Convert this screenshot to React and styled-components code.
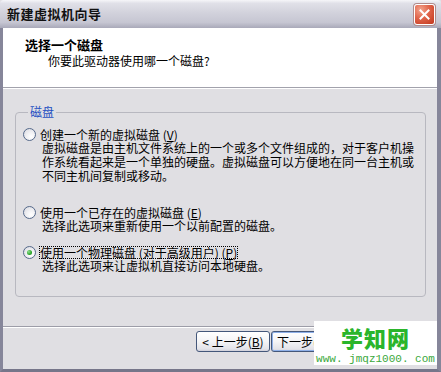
import React from 'react';
import styled, { createGlobalStyle } from 'styled-components';

const Global = createGlobalStyle`
  html, body { margin: 0; padding: 0; background: #e0dfe3; }
  body {
    font-family: "Noto Sans CJK SC", "Liberation Sans", sans-serif;
    font-size: 12px;
    color: #000;
  }
  #root { width: 441px; height: 372px; }
`;

const Window = styled.div`
  position: relative;
  width: 441px;
  height: 372px;
  display: flex;
  flex-direction: column;
  overflow: hidden;
  background: #e0dfe3;
`;

const TitleBar = styled.div`
  height: 28px;
  flex: none;
  display: flex;
  align-items: center;
  justify-content: space-between;
  padding: 0 6px 0 7px;
  box-sizing: border-box;
  border-radius: 4px 4px 0 0;
  background: linear-gradient(180deg, #f6f6f9 0%, #e0e0e8 12%, #d2d2dc 45%, #c6c6d2 80%, #a9a9b9 100%);
`;

const Title = styled.span`
  font-size: 13px;
  font-weight: 700;
  line-height: 16px;
  letter-spacing: 0.5px;
  color: #111;
`;

const CloseButton = styled.div`
  width: 21px;
  height: 21px;
  box-sizing: border-box;
  border: 1px solid #fff;
  border-radius: 3px;
  background: radial-gradient(circle at 30% 25%, #f3a48d 0%, #e0644a 45%, #c0361c 100%);
  display: flex;
  align-items: center;
  justify-content: center;
  box-shadow: 0 0 0 1px #b08a8a;
`;

const Frame = styled.div`
  flex: 1;
  display: flex;
  flex-direction: column;
  border-left: 3px solid #86869a;
  border-right: 4px solid #86869a;
  border-bottom: 3px solid #76768a;
  min-height: 0;
`;

const Header = styled.div`
  height: 60px;
  flex: none;
  box-sizing: border-box;
  background: #fff;
  border-bottom: 1px solid #a2a2ac;
  padding: 9px 0 0 22px;
`;

const HeaderTitle = styled.div`
  font-weight: 700;
  font-size: 13px;
  line-height: 16px;
`;

const HeaderSub = styled.div`
  margin: 1px 0 0 23px;
  line-height: 14px;
`;

const Body = styled.div`
  flex: 1;
  border-top: 1px solid #fff;
  padding: 16px 11px 0 12px;
  min-height: 0;
`;

const Group = styled.fieldset`
  margin: 0;
  padding: 0 0 0 7px;
  height: 192px;
  box-sizing: border-box;
  border: 1px solid #b8b8c0;
  border-radius: 4px;
`;

const Legend = styled.legend`
  margin-left: 5px;
  padding: 0 2px;
  line-height: 14px;
  color: #1f4fc2;
`;

const Option = styled.div`
  margin-top: ${p => p.$top}px;
`;

const RadioRow = styled.div`
  display: flex;
  align-items: center;
  height: 13px;
  line-height: 13px;
  white-space: nowrap;
`;

const Radio = styled.span`
  width: 13px;
  height: 13px;
  box-sizing: border-box;
  border-radius: 50%;
  border: 1px solid #55698a;
  background: radial-gradient(circle at 65% 70%, #ffffff 0%, #f1f1f4 40%, #d6d6de 100%);
  margin-right: 3px;
  display: flex;
  align-items: center;
  justify-content: center;
  flex: none;
  &::after {
    content: '';
    display: ${p => (p.$checked ? 'block' : 'none')};
    width: 5px;
    height: 5px;
    border-radius: 50%;
    background: radial-gradient(circle at 35% 35%, #8fe08f 0%, #2aa52a 60%, #1a7f1a 100%);
  }
`;

const Label = styled.span`
  padding: 0 1px;
  outline: ${p => (p.$focus ? '1px dotted #000' : 'none')};
  outline-offset: -1px;
`;

const Desc = styled.div`
  padding-left: 19px;
  line-height: 14px;
  white-space: nowrap;
`;

const Footer = styled.div`
  height: 43px;
  flex: none;
  box-sizing: border-box;
  border-top: 1px solid #9d9da8;
  box-shadow: inset 0 1px 0 #fff;
  padding: 4px 10px 0 0;
  display: flex;
  justify-content: flex-end;
  align-items: flex-start;
`;

const Button = styled.div`
  width: 74px;
  height: 21px;
  box-sizing: border-box;
  margin-left: ${p => p.$gap}px;
  border: 1px solid #44577a;
  border-radius: 3px;
  background: linear-gradient(180deg, #ffffff 0%, #f4f4f6 50%, #e2e2e8 90%, #cfcfda 100%);
  box-shadow: ${p => (p.$default ? 'inset 0 0 0 1px #8fb0e8' : 'none')};
  display: flex;
  align-items: center;
  justify-content: center;
  line-height: 14px;
  white-space: nowrap;
`;

const Watermark = styled.div`
  position: absolute;
  left: 314px;
  top: 321px;
  width: 123px;
  height: 44px;
  background: #fff;
  display: flex;
  flex-direction: column;
  align-items: center;
`;

const MarkBig = styled.div`
  font-family: "Noto Sans CJK SC", sans-serif;
  font-size: 22px;
  font-weight: 900;
  line-height: 32px;
  letter-spacing: 1px;
  color: #2bb52b;
`;

const MarkSmall = styled.div`
  font-family: "Liberation Mono", monospace;
  font-size: 11px;
  line-height: 12px;
  color: #3aa83a;
`;

export default function App() {
  return (
    <>
      <Global />
      <Window>
        <TitleBar>
          <Title>新建虚拟机向导</Title>
          <CloseButton>
            <svg width="11" height="11" viewBox="0 0 11 11">
              <path d="M1.5 1.5 L9.5 9.5 M9.5 1.5 L1.5 9.5" stroke="#fff" strokeWidth="2" strokeLinecap="square" />
            </svg>
          </CloseButton>
        </TitleBar>
        <Frame>
          <Header>
            <HeaderTitle>选择一个磁盘</HeaderTitle>
            <HeaderSub>你要此驱动器使用哪一个磁盘?</HeaderSub>
          </Header>
          <Body>
            <Group>
              <Legend>磁盘</Legend>
              <Option $top={9}>
                <RadioRow>
                  <Radio />
                  <Label>创建一个新的虚拟磁盘 (<u>V</u>)</Label>
                </RadioRow>
                <Desc>虚拟磁盘是由主机文件系统上的一个或多个文件组成的，对于客户机操</Desc>
                <Desc>作系统看起来是一个单独的硬盘。虚拟磁盘可以方便地在同一台主机或</Desc>
                <Desc>不同主机间复制或移动。</Desc>
              </Option>
              <Option $top={23}>
                <RadioRow>
                  <Radio />
                  <Label>使用一个已存在的虚拟磁盘 (<u>E</u>)</Label>
                </RadioRow>
                <Desc>选择此选项来重新使用一个以前配置的磁盘。</Desc>
              </Option>
              <Option $top={13}>
                <RadioRow>
                  <Radio $checked />
                  <Label $focus>使用一个物理磁盘 (对于高级用户) (<u>P</u>)</Label>
                </RadioRow>
                <Desc>选择此选项来让虚拟机直接访问本地硬盘。</Desc>
              </Option>
            </Group>
          </Body>
          <Footer>
            <Button $gap={0}>&lt; 上一步(<u>B</u>)</Button>
            <Button $gap={1} $default>下一步(<u>N</u>) &gt;</Button>
            <Button $gap={8}>取消</Button>
          </Footer>
        </Frame>
        <Watermark>
          <MarkBig>学知网</MarkBig>
          <MarkSmall>www. jmqz1000. com</MarkSmall>
        </Watermark>
      </Window>
    </>
  );
}
